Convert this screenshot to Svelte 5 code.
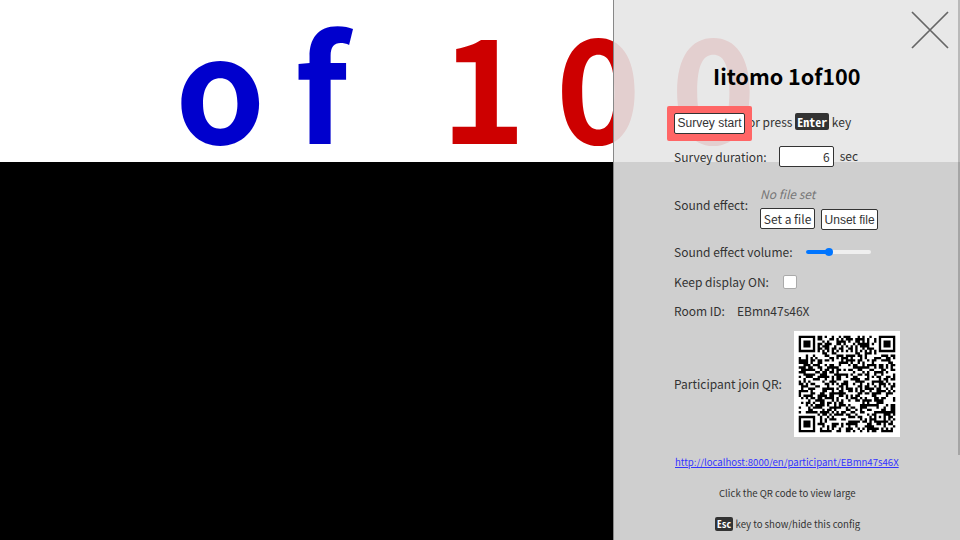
<script>
  const url = 'http://localhost:8000/en/participant/EBmn47s46X';

  // QR encoder: version 6, error correction level H, byte mode, mask 7
  const SIZE = 41;
  const DATA_PER_BLOCK = 15;
  const BLOCKS = 4;
  const EC = 28;
  const MASK = 7;

  function mul(a, b) {
    let r = 0;
    for (let i = 7; i >= 0; i--) {
      r = (r << 1) ^ ((r >>> 7) * 0x11d);
      r ^= ((b >>> i) & 1) * a;
    }
    return r;
  }

  function generator(n) {
    const g = Array(n).fill(0);
    g[n - 1] = 1;
    let root = 1;
    for (let i = 0; i < n; i++) {
      for (let j = 0; j < n; j++) {
        g[j] = mul(g[j], root);
        if (j + 1 < n) g[j] ^= g[j + 1];
      }
      root = mul(root, 2);
    }
    return g;
  }

  function remainder(data, g) {
    const r = g.map(() => 0);
    for (const b of data) {
      const f = b ^ r.shift();
      r.push(0);
      g.forEach((c, i) => (r[i] ^= mul(c, f)));
    }
    return r;
  }

  function codewords(text) {
    const bits = [];
    const put = (v, n) => {
      for (let i = n - 1; i >= 0; i--) bits.push((v >>> i) & 1);
    };
    put(4, 4);
    put(text.length, 8);
    for (const c of text) put(c.charCodeAt(0), 8);
    put(0, 4);
    while (bits.length % 8) bits.push(0);
    const bytes = [];
    for (let i = 0; i < bits.length; i += 8) bytes.push(parseInt(bits.slice(i, i + 8).join(''), 2));
    for (let pad = 0xec; bytes.length < DATA_PER_BLOCK * BLOCKS; pad ^= 0xec ^ 0x11) bytes.push(pad);
    const g = generator(EC);
    const blocks = [];
    for (let i = 0; i < BLOCKS; i++) blocks.push(bytes.slice(i * DATA_PER_BLOCK, (i + 1) * DATA_PER_BLOCK));
    const ecs = blocks.map((b) => remainder(b, g));
    const out = [];
    for (let i = 0; i < DATA_PER_BLOCK; i++) blocks.forEach((b) => out.push(b[i]));
    for (let i = 0; i < EC; i++) ecs.forEach((b) => out.push(b[i]));
    return out;
  }

  const keepsBit = (x, y) => (((x + y) % 2) + ((x * y) % 3)) % 2;

  function build(words) {
    const m = Array.from({ length: SIZE }, () => Array(SIZE).fill(0));
    const fixed = m.map((r) => r.map(() => false));
    const set = (x, y, v) => {
      if (x < 0 || y < 0 || x >= SIZE || y >= SIZE) return;
      m[y][x] = v ? 1 : 0;
      fixed[y][x] = true;
    };
    for (let i = 0; i < SIZE; i++) {
      set(6, i, i % 2 === 0);
      set(i, 6, i % 2 === 0);
    }
    for (const [cx, cy] of [[3, 3], [SIZE - 4, 3], [3, SIZE - 4]])
      for (let dy = -4; dy <= 4; dy++)
        for (let dx = -4; dx <= 4; dx++) {
          const d = Math.max(Math.abs(dx), Math.abs(dy));
          set(cx + dx, cy + dy, d !== 2 && d !== 4);
        }
    for (let dy = -2; dy <= 2; dy++)
      for (let dx = -2; dx <= 2; dx++) set(34 + dx, 34 + dy, Math.max(Math.abs(dx), Math.abs(dy)) !== 1);

    const info = (2 << 3) | MASK;
    let rem = info;
    for (let i = 0; i < 10; i++) rem = (rem << 1) ^ ((rem >>> 9) * 0x537);
    const f = ((info << 10) | rem) ^ 0x5412;
    const bit = (i) => (f >>> i) & 1;
    for (let i = 0; i <= 5; i++) set(8, i, bit(i));
    set(8, 7, bit(6));
    set(8, 8, bit(7));
    set(7, 8, bit(8));
    for (let i = 9; i < 15; i++) set(14 - i, 8, bit(i));
    for (let i = 0; i < 8; i++) set(SIZE - 1 - i, 8, bit(i));
    for (let i = 8; i < 15; i++) set(8, SIZE - 15 + i, bit(i));
    set(8, SIZE - 8, 1);

    let k = 0;
    for (let right = SIZE - 1; right >= 1; right -= 2) {
      if (right === 6) right = 5;
      for (let v = 0; v < SIZE; v++)
        for (let j = 0; j < 2; j++) {
          const x = right - j;
          const y = ((right + 1) & 2) === 0 ? SIZE - 1 - v : v;
          if (fixed[y][x]) continue;
          const b = k < words.length * 8 ? (words[k >>> 3] >>> (7 - (k & 7))) & 1 : 0;
          k++;
          m[y][x] = b ^ (keepsBit(x, y) === 0 ? 1 : 0);
        }
    }
    return m;
  }

  const qrPath = build(codewords(url))
    .flatMap((row, y) => row.map((v, x) => (v ? `M${x + 2} ${y + 2}h1v1h-1z` : '')))
    .join('');

  let duration = $state(6);
  let volume = $state(35);
  let keepOn = $state(false);
</script>

<main>
  <div class="banner"><span class="of">of</span>&nbsp;<span class="hundred">100</span></div>

  <aside>
    <button class="close" aria-label="Close">
      <svg viewBox="0 0 38 38" width="38" height="38"><path d="M1 1L37 37M37 1L1 37" stroke="#666" stroke-width="1.7" /></svg>
    </button>
    <h1>Iitomo 1of100</h1>
    <div class="row start">
      <span class="highlight"><button class="btn">Survey start</button></span>
      <span class="press">or press <kbd>Enter</kbd> key</span>
    </div>
    <div class="row duration">
      <label for="dur">Survey duration:</label>
      <input id="dur" class="num" type="text" bind:value={duration} />
      <span>sec</span>
    </div>
    <div class="row sound">
      <span class="name">Sound effect:</span>
      <div class="files">
        <em>No file set</em>
        <div class="buttons">
          <button class="btn file">Set a file</button>
          <button class="btn unset">Unset file</button>
        </div>
      </div>
    </div>
    <div class="row volume">
      <span>Sound effect volume:</span>
      <div class="slider"><div class="fill" style="width: {volume}%"></div><div class="thumb"></div></div>
    </div>
    <div class="row keep">
      <label for="keep">Keep display ON:</label>
      <input id="keep" type="checkbox" bind:checked={keepOn} />
    </div>
    <div class="row room"><span>Room ID:</span><span>EBmn47s46X</span></div>
    <div class="row qr">
      <span>Participant join QR:</span>
      <svg viewBox="0 0 45 45" width="106" height="106">
        <rect width="45" height="45" fill="#fff" />
        <path d={qrPath} fill="#000" />
      </svg>
    </div>
    <div class="link"><a href={url}>{url}</a></div>
    <div class="note">Click the QR code to view large</div>
    <div class="note esc"><kbd>Esc</kbd> key to show/hide this config</div>
    <div class="scroll"></div>
  </aside>
</main>

<style>
  main {
    position: relative;
    width: 960px;
    height: 540px;
    overflow: hidden;
    background: #000;
    font-family: 'Noto Sans CJK JP', 'Noto Sans', sans-serif;
  }
  .banner {
    height: 162px;
    box-sizing: border-box;
    padding-left: 175px;
    background: #fff;
    font-size: 144.5px;
    line-height: 162px;
    letter-spacing: 29.8px;
    font-weight: 700;
    white-space: nowrap;
  }
  .of {
    color: #0000cd;
  }
  .hundred {
    color: #cd0000;
  }
  aside {
    position: absolute;
    top: 0;
    right: 0;
    width: 347px;
    height: 540px;
    box-sizing: border-box;
    border-left: 1px solid #888;
    padding-left: 60px;
    background: rgba(229, 229, 229, 0.9);
    color: #333;
    font-size: 12px;
    line-height: 20px;
    white-space: nowrap;
  }
  .close {
    position: absolute;
    left: 297px;
    top: 11px;
    width: 38px;
    height: 38px;
    padding: 0;
    border: 0;
    background: none;
  }
  .close svg {
    display: block;
  }
  h1 {
    margin: 0;
    padding: 60px 0 0 39px;
    height: 45px;
    font-size: 21.6px;
    line-height: 32px;
    font-weight: 700;
    color: #000;
  }
  .row {
    display: flex;
    align-items: center;
  }
  .btn {
    box-sizing: border-box;
    border: 1px solid #333;
    border-radius: 2px;
    background: #fff;
    color: #333;
    font-family: 'Liberation Sans', Arial, sans-serif;
    font-size: 12px;
    line-height: 18px;
    padding: 0;
    text-align: center;
    width: 71px;
    height: 21px;
    display: block;
  }
  .start {
    height: 36px;
  }
  .highlight {
    position: relative;
    margin-left: -7px;
    border: 7px solid #f66;
    background: #f66;
    border-radius: 2px;
    z-index: 1;
  }
  .press {
    margin: -2px 0 0 -4px;
  }
  kbd {
    display: inline-block;
    background: #333;
    color: #fff;
    font-family: 'Noto Sans Mono CJK JP', 'Noto Sans CJK JP', sans-serif;
    font-weight: 700;
    border-radius: 2px;
    line-height: 17px;
    padding: 0 2px;
  }
  .duration {
    margin-top: 4px;
    height: 22px;
  }
  .duration label {
    margin-top: 1px;
  }
  .num {
    box-sizing: border-box;
    width: 55px;
    height: 21px;
    margin: 0 6px 0 12px;
    border: 1px solid #333;
    border-radius: 2px;
    padding: 0 3px;
    text-align: right;
    color: #333;
    background: #fff;
    font-family: inherit;
    font-size: 12px;
  }
  .sound {
    margin-top: 17px;
    height: 46px;
  }
  .name {
    margin-top: -4px;
  }
  .files {
    margin-left: 12px;
  }
  em {
    display: block;
    color: #777;
    height: 24px;
  }
  .buttons {
    display: flex;
    gap: 6px;
  }
  .file {
    width: 55px;
    font-family: inherit;
  }
  .unset {
    width: 57px;
    margin-top: 1px;
  }
  .volume {
    margin-top: 7px;
    height: 30px;
  }
  .slider {
    position: relative;
    margin-left: 13px;
    width: 65px;
    height: 4px;
    border-radius: 2px;
    background: #efefef;
  }
  .fill {
    height: 4px;
    border-radius: 2px;
    background: #0075ff;
  }
  .thumb {
    position: absolute;
    left: 19px;
    top: -2px;
    width: 8px;
    height: 8px;
    border-radius: 50%;
    background: #0075ff;
  }
  .keep {
    height: 29px;
  }
  .keep input {
    appearance: none;
    width: 14px;
    height: 14px;
    box-sizing: border-box;
    margin: 0 0 0 14px;
    border: 1px solid #aaa;
    border-radius: 2px;
    background: #fff;
  }
  .room {
    height: 30px;
    gap: 12px;
  }
  .qr {
    margin-top: 5px;
    gap: 12px;
    height: 106px;
  }
  .link {
    padding: 15px 0 0 1px;
    font-size: 9.6px;
  }
  .link a {
    color: #33f;
  }
  .note {
    margin: 11px 0 0 45px;
    font-size: 9.6px;
  }
  .esc {
    margin-left: 41px;
  }
  .esc kbd {
    line-height: 14px;
  }
  .scroll {
    position: absolute;
    right: 0;
    top: 0;
    width: 2px;
    height: 455px;
    background: rgba(0, 0, 0, 0.2);
  }
</style>
